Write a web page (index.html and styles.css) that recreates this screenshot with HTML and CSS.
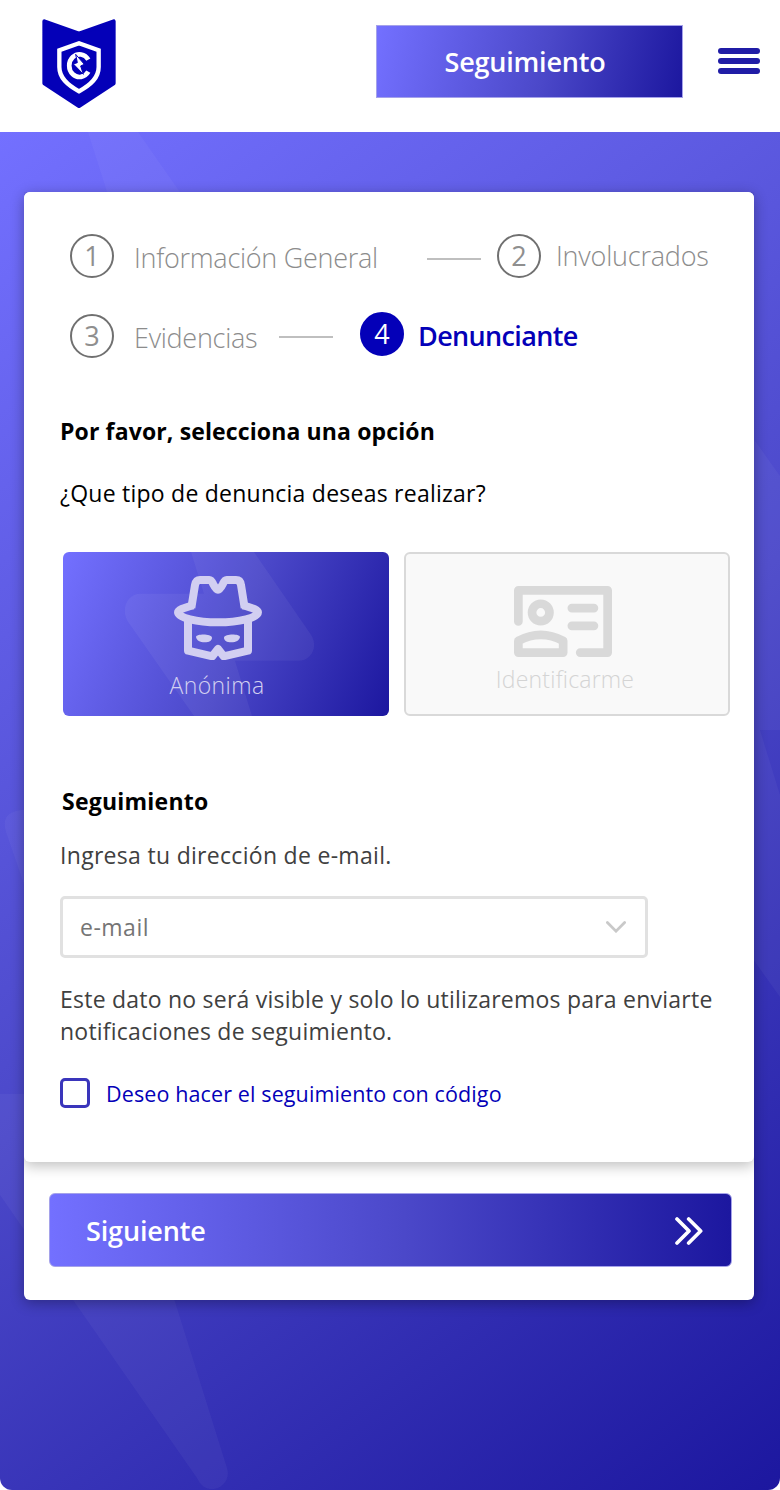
FILE: index.html
```html
<!DOCTYPE html>
<html lang="es">
<head>
<meta charset="utf-8">
<title>Denuncia</title>
<link rel="stylesheet" href="styles.css">
</head>
<body>
<header class="topbar">
  <svg class="logo" viewBox="36 26 222 268">
    <path d="M43 33 147 70 251 33V219L147 287 43 219Z" fill="#0400b8" stroke="#0400b8" stroke-width="12" stroke-linejoin="round"/>
    <path d="M147 99 206 120V170C206 203 182 224 147 243 112 224 88 203 88 170V120Z" fill="none" stroke="#fff" stroke-width="13"/>
    <path d="M175 148A31 34 0 1 0 175 184" fill="none" stroke="#fff" stroke-width="14"/>
    <path d="M137 132 163 162 152 167 160 192 130 161 142 157Z" fill="#fff" stroke="#0400b8" stroke-width="3"/>
  </svg>
  <button class="track-btn">Seguimiento</button>
  <div class="menu"><i></i><i></i><i></i></div>
</header>
<main class="stage">
  <svg class="bolts" viewBox="0 132 780 1358">
    <path d="M88 132H138L230 264H130Z"/>
    <path d="M24 810H22Q0 812 6 832L40 930V810Z"/>
    <path d="M0 1094H110L227 1468C233 1486 207 1500 197 1478L0 1195Z"/>
    <path d="M740 420 780 476V730H760L780 795V997L740 941Z"/>
  </svg>
  <section class="card">
    <div class="panel">
      <div class="steps">
        <div class="step"><b class="num">1</b><span class="label label-1">Información General</span></div>
        <i class="dash dash-a"></i>
        <div class="step step-2"><b class="num">2</b><span class="label">Involucrados</span></div>
      </div>
      <div class="steps steps-b">
        <div class="step"><b class="num">3</b><span class="label label-3">Evidencias</span></div>
        <i class="dash dash-b"></i>
        <div class="step step-4"><b class="num">4</b><span class="label">Denunciante</span></div>
      </div>
      <h2 class="title">Por favor, selecciona una opción</h2>
      <p class="question">¿Que tipo de denuncia deseas realizar?</p>
      <div class="options">
        <div class="option option-on">
          <svg class="opt-bolt" viewBox="39 36 978 492"><path d="M423 36H612L783 284C806 320 784 362 746 362H555L606 528H432L233 244C212 206 232 161 272 161H462Z"/></svg>
          <svg class="spy" viewBox="372 107 264 253" fill="none" stroke="#d2cff1" stroke-width="24">
            <path d="M424 203 435 134Q438 119 450 119H478Q484 119 489 130 498 148 504 148 510 148 519 130 524 119 530 119H558Q571 119 573 134L584 203"/>
            <path d="M430 195Q384 206 384 216C384 232 440 246 504 246S624 232 624 216Q624 206 578 195"/>
            <path d="M414 238V331L487 348 504 326 521 348 594 331V238" stroke-linejoin="round"/>
            <path d="M438 290C440 280 484 280 486 292 486 300 478 306 464 306 450 306 440 300 438 290ZM570 290C568 280 524 280 522 292 522 300 530 306 544 306 558 306 568 300 570 290Z" fill="#d2cff1" stroke="none"/>
          </svg>
          <span class="opt-a">Anónima</span>
        </div>
        <div class="option option-off">
          <svg class="idcard" viewBox="358 137 293 212" fill="none" stroke="#d9d9d9" stroke-width="26" stroke-linecap="round" stroke-linejoin="round">
            <path d="M371 243V150H638V336H556M531 203H597M531 256H597M371 336V301Q438 265 505 301V336Z"/>
            <circle cx="438" cy="216" r="26"/>
          </svg>
          <span class="opt-b">Identificarme</span>
        </div>
      </div>
      <h2 class="title title-b">Seguimiento</h2>
      <p class="hint">Ingresa tu dirección de e-mail.</p>
      <div class="field"><span>e-mail</span>
        <svg class="chev" viewBox="619 124 58 34"><path d="M623 128 648 153 673 128" fill="none" stroke="#c9c9c9" stroke-width="8" stroke-linecap="round"/></svg>
      </div>
      <p class="note">Este dato no será visible y solo lo utilizaremos para enviarte<br>notificaciones de seguimiento.</p>
      <label class="check"><i class="box"></i><span>Deseo hacer el seguimiento con código</span></label>
    </div>
    <button class="next"><span>Siguiente</span>
      <svg class="arrows" viewBox="526 200 84 84"><path d="M532 206 568 242 532 278M567 206 603 242 567 278" fill="none" stroke="#fff" stroke-width="11" stroke-linecap="round" stroke-linejoin="round"/></svg>
    </button>
  </section>
</main>
</body>
</html>
```
FILE: styles.css
```css
* { box-sizing: border-box; }
body { margin: 0; background: #fff; font-family: "Open Sans", "Noto Sans", sans-serif; }
h2, p { margin: 0; white-space: nowrap; }
svg { display: block; flex: none; }
button { border: 0; font: inherit; padding: 0; }

.topbar { height: 132px; display: flex; align-items: flex-start; padding: 0 19px 0 42px; }
.logo { width: 74px; height: 89.3px; margin-top: 18.7px; }
.track-btn { width: 307px; height: 73px; margin: 25px 35px 0 auto; padding-right: 9px; border: 1px solid #a5a2ea; color: #fff; font-size: 27px; font-weight: 600; letter-spacing: -0.22px; line-height: 70px; text-align: center; background: linear-gradient(102deg, #7370ff, #4b48c9 55%, #1c179f); }
.menu { display: grid; gap: 4px; width: 43px; margin-top: 48px; }
.menu i { height: 6px; width: 42px; border-radius: 3px; background: #201ca6; }

.stage { position: relative; height: 1358px; padding: 60px 26px 0 24px; border-radius: 0 0 12px 12px; overflow: hidden; background: linear-gradient(143deg, #7370ff, #4b48c9 52%, #1c179f); }
.bolts { position: absolute; inset: 0; width: 780px; height: 1358px; fill: rgba(255,255,255,.04); }

.card { position: relative; height: 1108px; background: #fff; border-radius: 6px; box-shadow: 0 3px 14px rgba(0,0,0,.32); }
.panel { height: 970px; border-radius: 6px; background: #fff; padding: 42px 24px 0 36px; box-shadow: 0 4px 14px rgba(0,0,0,.25); clip-path: inset(0 0 -30px 0); }

.steps { display: flex; height: 44px; padding-left: 10px; }
.steps-b { margin-top: 36px; }
.step { display: flex; }
.num { width: 44px; height: 44px; border: 2px solid #707070; border-radius: 50%; color: #8f8f8f; font-size: 27px; font-weight: 400; line-height: 39px; text-align: center; }
.label { margin-left: 20px; font-size: 27px; font-weight: 300; letter-spacing: -0.2px; line-height: 48px; color: #8c8c8c; white-space: nowrap; }
.label-1 { width: 244px; letter-spacing: -0.28px; }
.label-3 { width: 124px; letter-spacing: -0.28px; }
.step-2 .label { margin-left: 15px; line-height: 44px; }
.dash { width: 54px; height: 2px; background: #bfbfbf; margin-top: 24px; }
.dash-a { margin-left: 49px; margin-right: 16px; }
.dash-b { margin-left: 21px; margin-right: 27px; margin-top: 22px; }
.step-4 { margin-top: -2px; }
.step-4 .num { background: #0400b8; border-color: #0400b8; color: #fff; }
.step-4 .label { margin-left: 14px; font-weight: 600; letter-spacing: -0.65px; color: #0400b8; line-height: 48px; }

.title { font-size: 23px; font-weight: 700; letter-spacing: 0.13px; line-height: 32px; color: #000; margin-top: 57px; }
.question { font-size: 23px; letter-spacing: 0.24px; line-height: 32px; color: #000; margin-top: 30px; }
.options { display: grid; grid-template-columns: 326px 326px; gap: 15px; margin: 43px 0 0 3px; }
.option { position: relative; height: 164px; border-radius: 6px; display: flex; flex-direction: column; align-items: center; font-size: 23px; font-weight: 300; line-height: 32px; overflow: hidden; }
.option-on { background: linear-gradient(112deg, #7370ff, #4b48c9 53%, #1c179f); color: #d2cff1; padding: 24px 16px 0 0; }
.option-off { background: #f9f9f9; border: 2px solid #d9d9d9; color: #d4d4d4; padding: 32px 8px 0 0; }
.opt-bolt { position: absolute; inset: 0; width: 326px; height: 164px; fill: rgba(255,255,255,.05); }
.opt-a { position: relative; letter-spacing: 0.4px; padding-right: 2px; }
.opt-b { letter-spacing: 0.2px; padding-left: 4px; }
.spy { position: relative; width: 88px; height: 84.3px; margin-bottom: 9px; }
.idcard { width: 98px; height: 71px; margin-bottom: 6px; }

.title-b { margin: 69px 0 0 2px; letter-spacing: 0.23px; }
.hint { font-size: 23px; letter-spacing: 0.3px; line-height: 32px; color: #404040; margin-top: 22px; }
.field { width: 588px; height: 62px; margin-top: 25px; border: 3px solid #e1e1e1; border-radius: 5px; display: flex; align-items: center; justify-content: space-between; padding: 0 19px 0 17px; font-size: 23px; letter-spacing: 0.5px; color: #757575; }
.chev { width: 20px; height: 12px; }
.note { font-size: 23px; letter-spacing: 0.23px; line-height: 32px; color: #404040; margin-top: 25px; }
.check { display: flex; gap: 16px; align-items: center; height: 30px; margin-top: 31px; font-size: 21.5px; letter-spacing: 0.12px; color: #0400b8; }
.box { width: 30px; height: 30px; border: 3px solid #3a35bb; border-radius: 5px; }

.next { display: flex; align-items: center; justify-content: space-between; width: 683px; height: 74px; margin: 31px 0 0 25px; padding: 0 28px 0 36px; border: 1px solid #a5a2ea; border-radius: 6px; color: #fff; font-size: 27px; font-weight: 600; letter-spacing: -0.15px; background: linear-gradient(90deg, #7370ff, #4b48c9 52%, #1c179f); }
.arrows { width: 28px; height: 28px; margin-top: 1px; }
```
